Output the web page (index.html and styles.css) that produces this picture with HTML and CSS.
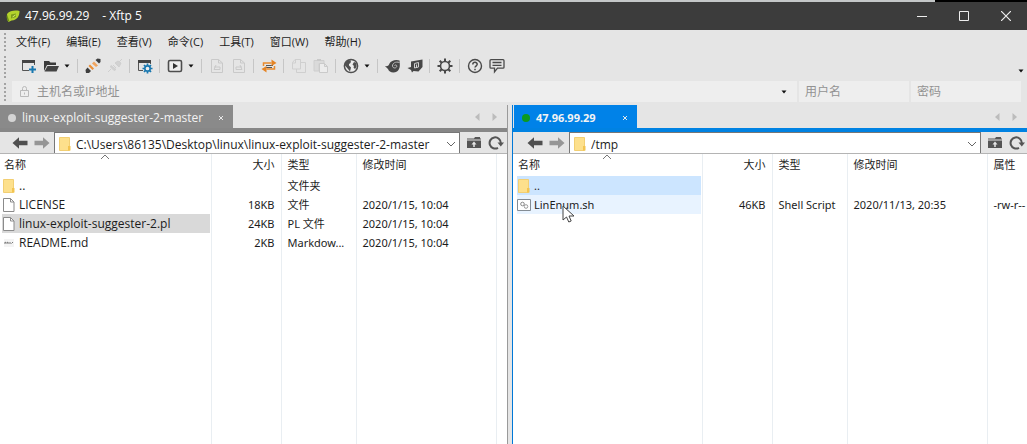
FILE: index.html
```
<!DOCTYPE html>
<html lang="zh-CN">
<head>
<meta charset="utf-8">
<meta name="viewport" content="width=device-width, initial-scale=1">
<title>47.96.99.29 - Xftp 5</title>
<link rel="stylesheet" href="styles.css">
</head>
<body>
<svg class="defs" width="0" height="0" aria-hidden="true">
  <symbol id="folder" viewBox="0 0 14 16"><path d="M1.500 1.500h10v13h-10z" fill="#fde08c" stroke="#f2cf73"/><path d="M10 10h2.500v4.500H10z" fill="#f3c450"/></symbol>
  <symbol id="file" viewBox="0 0 14 16"><path d="M1.500 1.500h7l3.500 3.500v9.500H1.500z" fill="#fff" stroke="#8b8b8b"/><path d="M8.500 1.500V5H12" fill="none" stroke="#8b8b8b"/></symbol>
  <symbol id="back" viewBox="0 0 16 14"><path d="M0.500 7L7 1.300V4.800h8.500v4.400H7v3.500z" fill="currentColor"/></symbol>
  <symbol id="up" viewBox="0 0 16 14"><path d="M2 2.500h6l1-1.500h5v1.500h1v1H1v-1zM1 4.500h14V12H1z" fill="#555"/><path d="M8 11V7.500" stroke="#e8e8e8" stroke-width="1.500"/><path d="M5.500 8.500L8 5.500l2.500 3z" fill="#e8e8e8"/></symbol>
  <symbol id="reload" viewBox="0 0 16 16"><path d="M10 12.800A5.600 5.600 0 1 1 12.800 8" fill="none" stroke="#555" stroke-width="2"/><path d="M9.500 7.500h6.500l-3.200 4z" fill="#555"/></symbol>
  <symbol id="chev" viewBox="0 0 10 6"><path d="M1 1l4 4 4-4" fill="none" stroke="#666"/></symbol>
  <symbol id="sort" viewBox="0 0 10 6"><path d="M1 5l4-4 4 4" fill="none" stroke="#777"/></symbol>
  <symbol id="caret" viewBox="0 0 8 6"><path d="M1.500 1.500h5L4 4.500z" fill="#111"/></symbol>
  <symbol id="prev" viewBox="0 0 6 8"><path d="M5.500 0v8L1 4z" fill="#bcbcbc"/></symbol>
  <symbol id="next" viewBox="0 0 6 8"><path d="M0.500 0v8L5 4z" fill="#bcbcbc"/></symbol>
  <symbol id="close" viewBox="0 0 6 6"><path d="M1 1l4 4M5 1L1 5" stroke="#e8e8e8"/></symbol>
</svg>
<div class="app">
  <div class="backdrop"></div>
  <header class="titlebar">
    <svg class="logo" viewBox="0 0 14 14" width="14" height="14"><path d="M1 5C4 1.500 9 1 13.500 2c0 5-2 9-8 9.500L2.500 13 1 10z" fill="#b4d22c"/><path d="M1 5.500l2.500 7L1.500 12 0.500 8z" fill="#6d8f18"/><path d="M5 9.500V5.500l5-1v3.500z" fill="#7d9c1c"/><path d="M6.500 8l3-2" stroke="#d8ec70" fill="none"/></svg>
    <h1><span>47.96.99.29</span><span>- Xftp 5</span></h1>
    <div class="winbtns">
      <button aria-label="最小化"><svg width="10" height="10" viewBox="0 0 10 10"><path d="M0 5.500h10" stroke="#eee"/></svg></button>
      <button aria-label="最大化"><svg width="10" height="10" viewBox="0 0 10 10"><path d="M.5.5h9v9h-9z" fill="none" stroke="#eee"/></svg></button>
      <button aria-label="关闭"><svg width="10" height="10" viewBox="0 0 10 10"><path d="M0 0l10 10M10 0L0 10" stroke="#eee" stroke-width="1.200"/></svg></button>
    </div>
  </header>

  <nav class="menubar">
    <button>文件(F)</button><button>编辑(E)</button><button>查看(V)</button><button>命令(C)</button><button>工具(T)</button><button>窗口(W)</button><button>帮助(H)</button>
  </nav>

  <div class="toolbar" role="toolbar">
    <button aria-label="新建"><svg viewBox="0 0 16 16"><path d="M8 12.500H1.500v-10h12V7" fill="none" stroke="#555"/><path d="M1 2h13v3H1z" fill="#444"/><path d="M11.500 8v7M8 11.500h7" stroke="#1978b0" stroke-width="2"/></svg></button>
    <button aria-label="打开"><svg viewBox="0 0 16 16"><path d="M1 13V3h5l1.500 1.500H13V7H4z" fill="#3c3c3c"/><path d="M4.500 8H16l-2.500 5.500H1.500z" fill="#444"/></svg></button>
    <button class="drop" aria-label="打开选项"><svg viewBox="0 0 8 6"><use href="#caret"/></svg></button>
    <i class="sep"></i>
    <button aria-label="连接"><svg viewBox="0 0 16 16"><path d="M0.500 12l2-2.500 3.500 3.500-2 2H1z" fill="#3e3e3e"/><path d="M3.500 8l1.500-1.500 4 4L7.500 12z" fill="#ec8e34"/><path d="M7 5.500l2-2 4 4-2 1.500z" fill="#f0a45e"/><path d="M10.500 2l2-1.500L15.500 1v3L14 5.500z" fill="#3e3e3e"/></svg></button>
    <button aria-label="断开" disabled><svg viewBox="0 0 16 16"><path d="M1 14l3-3M3.500 9l3.500 3.500 2-1-5-4zM8 5l4 4 2-4-3-2zM6 7l3 3M12 4l3-3" stroke="#cfcfcf" fill="#d2d2d2"/></svg></button>
    <i class="sep"></i>
    <button aria-label="属性"><svg viewBox="0 0 16 16"><path d="M6 12.500H1.500v-10h12V6" fill="none" stroke="#555"/><path d="M1 2h13v3H1z" fill="#444"/><circle cx="10.500" cy="10.500" r="2.700" fill="#eee" stroke="#1978b0" stroke-width="1.700"/><path d="M10.500 5.500v2M10.500 13.500v2M5.500 10.500h2M13.500 10.500h2M7 7l1.300 1.300M12.700 12.700L14 14M14 7l-1.300 1.300M8.300 12.700L7 14" stroke="#1978b0" stroke-width="1.700"/></svg></button>
    <i class="sep"></i>
    <button aria-label="传输"><svg viewBox="0 0 16 16"><rect x="1.500" y="2.500" width="13" height="11" rx="1.500" fill="#eee" stroke="#4d4d4d" stroke-width="1.600"/><path d="M6 5l5 3-5 3z" fill="#333"/></svg></button>
    <button class="drop" aria-label="传输选项"><svg viewBox="0 0 8 6"><use href="#caret"/></svg></button>
    <i class="sep"></i>
    <button aria-label="上传" disabled><svg viewBox="0 0 16 16"><path d="M2.500 1.500h7L13.500 5v9.500h-11zM9.500 1.500V5h4M5 9h6v2.500H5L7 7" fill="none" stroke="#c9c9c9"/></svg></button>
    <button aria-label="下载" disabled><svg viewBox="0 0 16 16"><path d="M2.500 1.500h7L13.500 5v9.500h-11zM9.500 1.500V5h4M11 9H5v2.500h6L9 7" fill="none" stroke="#c9c9c9"/></svg></button>
    <i class="sep"></i>
    <button aria-label="同步"><svg viewBox="0 0 16 16"><path d="M5 7.500h7M4 9.500h7" stroke="#555"/><path d="M2.500 8V5h8M13.500 8v3h-8" fill="none" stroke="#e98b2d" stroke-width="1.500"/><path d="M10.500 1.500L15.500 5l-5 3z" fill="#e58424"/><path d="M5.500 8L.5 11l5 3.500z" fill="#e58424"/></svg></button>
    <i class="sep"></i>
    <button aria-label="复制" disabled><svg viewBox="0 0 16 16"><path d="M1.500 4.500L4 1.500h5.500V11h-8zM10 4.500h4.500v10h-9V11M4.500 2v3h-3" fill="none" stroke="#cfcfcf"/></svg></button>
    <button aria-label="粘贴" disabled><svg viewBox="0 0 16 16"><path d="M1 2.500h10v3H6V13H1z" fill="#dadada" stroke="#cecece"/><path d="M4 1h4v2H4z" fill="#c9c9c9"/><path d="M6.500 5.500h5l3 3v6h-8zM11.500 5.500v3h3" fill="#ececec" stroke="#cacaca"/></svg></button>
    <i class="sep"></i>
    <button aria-label="浏览器"><svg viewBox="0 0 16 16"><circle cx="8" cy="8" r="6.600" fill="#ececec" stroke="#505050" stroke-width="1.500"/><path d="M2 5l3-3 3 .5L7.500 5 6 6v1.500L8 9.500l-1 4L5 11 2 7.500zM11 4l2.500 1v4l-1.500 2-1.500-1.500.5-1.500-1.500-1.500z" fill="#505050"/></svg></button>
    <button class="drop" aria-label="浏览器选项"><svg viewBox="0 0 8 6"><use href="#caret"/></svg></button>
    <i class="sep"></i>
    <button aria-label="Xshell"><svg viewBox="0 0 16 16"><path d="M0 8c2.500.5 4-.5 4.500-2.500C6 2.500 11 1 14.500 2.500c.5 4.500 1 8.500-2.500 11-4 2-8 .5-9-2.500z" fill="#464646"/><path d="M14.500 4.500C10.500 3.200 7.500 5.200 7.500 8c.2 2.500 3.800 2.600 4.300.4C12 7 10.500 6.500 9.500 7.500" fill="none" stroke="#bdbdbd"/></svg></button>
    <button aria-label="Xftp"><svg viewBox="0 0 16 16"><path d="M4 3.500L15.500 1.500V9l-4 4.500-5-.5L5 14.500 4 12 .5 10 4 9z" fill="#464646"/><path d="M7.500 5.500l4-1v4.500l-4 1z" fill="none" stroke="#cfcfcf"/><path d="M9.500 9V6.500" stroke="#cfcfcf"/></svg></button>
    <i class="sep"></i>
    <button aria-label="选项"><svg viewBox="0 0 16 16"><circle cx="8" cy="8" r="4.500" fill="none" stroke="#484848" stroke-width="1.600"/><path d="M8 .5v3M8 12.500v3M.5 8h3M12.500 8h3M2.700 2.700l2 2M11.300 11.300l2 2M13.300 2.700l-2 2M4.700 11.300l-2 2" stroke="#484848" stroke-width="2"/></svg></button>
    <i class="sep"></i>
    <button aria-label="帮助"><svg viewBox="0 0 16 16"><circle cx="8" cy="8" r="6.500" fill="none" stroke="#4a4a4a" stroke-width="1.400"/><path d="M5.800 6.500C5.800 3.500 10.300 3.700 10.200 6.300 10.200 7.800 8 7.800 8 9.600M8 10.700v1.600" fill="none" stroke="#4a4a4a" stroke-width="1.500"/></svg></button>
    <button aria-label="反馈"><svg viewBox="0 0 16 16"><path d="M2 1.700h12q1 0 1 1v6.500q0 1-1 1H8.500L5.500 14v-3.800H2q-1 0-1-1V2.700q0-1 1-1zM3.500 4.500h9M3.500 7.300h9" fill="none" stroke="#4a4a4a" stroke-width="1.300"/></svg></button>
    <button class="drop overflow" aria-label="更多"><svg viewBox="0 0 8 6"><use href="#caret"/></svg></button>
  </div>

  <form class="connect">
    <div class="host">
      <svg width="9" height="11" viewBox="0 0 9 11"><path d="M.5 4.500h8v6h-8zM2.500 4.500v-2q0-2 2-2t2 2v2M4.500 6.500v2" fill="none" stroke="#b9b9b9"/></svg>
      <input type="text" aria-label="主机名或IP地址" placeholder="主机名或IP地址">
      <button type="button" class="drop" aria-label="历史"><svg viewBox="0 0 8 6"><use href="#caret"/></svg></button>
    </div>
    <input type="text" aria-label="用户名" placeholder="用户名">
    <input type="password" aria-label="密码" placeholder="密码">
  </form>

  <main class="panes">
    <section class="pane local">
      <div class="tabs">
        <div class="tab"><i class="dot"></i><span>linux-exploit-suggester-2-master</span><button aria-label="关闭标签"><svg width="6" height="6"><use href="#close"/></svg></button></div>
        <div class="scroll"><button aria-label="上一个"><svg width="6" height="8"><use href="#prev"/></svg></button><button aria-label="下一个"><svg width="6" height="8"><use href="#next"/></svg></button></div>
      </div>
      <div class="pathbar">
        <button aria-label="后退"><svg width="16" height="14"><use href="#back"/></svg></button>
        <button class="fwd" aria-label="前进"><svg width="16" height="14"><use href="#back"/></svg></button>
        <div class="path"><svg width="14" height="16"><use href="#folder"/></svg><input type="text" aria-label="本地路径" value="C:\Users\86135\Desktop\linux\linux-exploit-suggester-2-master"><button aria-label="展开"><svg width="10" height="6"><use href="#chev"/></svg></button></div>
        <button aria-label="上级"><svg width="16" height="14"><use href="#up"/></svg></button>
        <button aria-label="刷新"><svg width="16" height="16"><use href="#reload"/></svg></button>
      </div>
      <div class="list">
        <table>
          <colgroup><col class="c-name"><col class="c-size"><col class="c-type"><col class="c-date"><col></colgroup>
          <thead><tr><th>名称<svg class="sort" width="10" height="6"><use href="#sort"/></svg></th><th class="num">大小</th><th>类型</th><th>修改时间</th><th></th></tr></thead>
          <tbody>
            <tr><td><span class="name"><svg width="14" height="16"><use href="#folder"/></svg>..</span></td><td></td><td>文件夹</td><td></td><td></td></tr>
            <tr><td><span class="name"><svg width="14" height="16"><use href="#file"/></svg>LICENSE</span></td><td class="num">18KB</td><td>文件</td><td>2020/1/15, 10:04</td><td></td></tr>
            <tr><td><span class="name selected"><svg width="14" height="16"><use href="#file"/></svg>linux-exploit-suggester-2.pl</span></td><td class="num">24KB</td><td>PL 文件</td><td>2020/1/15, 10:04</td><td></td></tr>
            <tr><td><span class="name"><svg width="14" height="16" viewBox="0 0 14 16"><path d="M2 4h10v8H2z" fill="#f4f4f4"/><path d="M3 9V7l1.500 1L6 7v2M8 7v2M9.500 8.500L11 7" stroke="#777" fill="none"/></svg>README.md</span></td><td class="num">2KB</td><td>Markdow...</td><td>2020/1/15, 10:04</td><td></td></tr>
            <tr class="rest"><td></td><td></td><td></td><td></td><td></td></tr>
          </tbody>
        </table>
      </div>
    </section>

    <section class="pane remote">
      <div class="tabs">
        <div class="tab"><i class="dot"></i><span>47.96.99.29</span><button aria-label="关闭标签"><svg width="6" height="6"><use href="#close"/></svg></button></div>
        <div class="scroll"><button aria-label="上一个"><svg width="6" height="8"><use href="#prev"/></svg></button><button aria-label="下一个"><svg width="6" height="8"><use href="#next"/></svg></button></div>
      </div>
      <div class="pathbar">
        <button aria-label="后退"><svg width="16" height="14"><use href="#back"/></svg></button>
        <button class="fwd" aria-label="前进"><svg width="16" height="14"><use href="#back"/></svg></button>
        <div class="path"><svg width="14" height="16"><use href="#folder"/></svg><input type="text" aria-label="远程路径" value="/tmp"><button aria-label="展开"><svg width="10" height="6"><use href="#chev"/></svg></button></div>
        <button aria-label="上级"><svg width="16" height="14"><use href="#up"/></svg></button>
        <button aria-label="刷新"><svg width="16" height="16"><use href="#reload"/></svg></button>
      </div>
      <div class="list">
        <table>
          <colgroup><col class="c-name"><col class="c-size"><col class="c-type"><col class="c-date"><col></colgroup>
          <thead><tr><th>名称<svg class="sort" width="10" height="6"><use href="#sort"/></svg></th><th class="num">大小</th><th>类型</th><th>修改时间</th><th>属性</th></tr></thead>
          <tbody>
            <tr><td><span class="name selected"><svg width="14" height="16"><use href="#folder"/></svg>..</span></td><td></td><td></td><td></td><td></td></tr>
            <tr><td><span class="name hover"><svg width="14" height="16" viewBox="0 0 14 16"><path d="M.5 2.500h13v11H.5z" fill="#fff" stroke="#848c94"/><circle cx="5.500" cy="7" r="1.800" fill="none" stroke="#888"/><circle cx="9" cy="9.500" r="1.800" fill="none" stroke="#999"/></svg>LinEnum.sh</span><svg class="pointer" width="13" height="18" viewBox="0 0 13 18"><path d="M1 1v14l3.500-3 2.300 5 2.400-1-2.200-5H12z" fill="#fff" stroke="#444"/></svg></td><td class="num">46KB</td><td>Shell Script</td><td>2020/11/13, 20:35</td><td>-rw-r--</td></tr>
            <tr class="rest"><td></td><td></td><td></td><td></td><td></td></tr>
          </tbody>
        </table>
      </div>
    </section>
  </main>
</div>
</body>
</html>
```

FILE: styles.css
```
* { box-sizing: border-box; }

body {
  margin: 0;
  background: #e5e5e5;
  color: #1c1c1c;
  font: 11px/16px "Open Sans", "Noto Sans CJK SC", sans-serif;
}

button, input {
  font: inherit;
  color: inherit;
  border: 0;
  padding: 0;
  margin: 0;
  background: none;
  outline: 0;
}

svg { display: block; flex: none; }
.defs { position: absolute; }

button {
  display: flex;
  flex: none;
  align-items: center;
  justify-content: center;
}

.app { display: flex; flex-direction: column; height: 100vh; overflow: hidden; }

.backdrop {
  flex: none;
  height: 2px;
  background: linear-gradient(90deg, #c4c7c8 91%, #000 91%);
}

.titlebar {
  display: flex;
  flex: none;
  align-items: center;
  height: 28px;
  padding-left: 6px;
  background: #3c3c3c;
  color: #fff;
}
.titlebar h1 {
  display: flex;
  gap: 13px;
  margin: 0 0 0 5px;
  font-size: 12px;
  font-weight: 400;
}
.winbtns { display: flex; margin-left: auto; }
.winbtns button { width: 42px; height: 28px; }

.menubar, .toolbar, .connect {
  display: flex;
  flex: none;
  align-items: center;
  position: relative;
}
.menubar::before, .toolbar::before, .connect::before {
  content: "";
  position: absolute;
  left: 4px;
  top: 3px;
  bottom: 2px;
  border-left: 2px dotted #a3a3a3;
}
.menubar { gap: 16px; height: 23px; padding-left: 16px; }

.toolbar { gap: 6px; height: 27px; padding: 0 4px 1px 21px; }
.toolbar button { width: 16px; height: 16px; }
.toolbar svg { width: 16px; height: 16px; }
.toolbar .drop { width: 8px; margin-left: -2px; }
.toolbar .drop svg, .drop svg { width: 8px; height: 6px; }
.toolbar .overflow { margin-left: auto; margin-right: -2px; align-self: flex-end; height: 16px; }
.sep { flex: none; width: 2px; height: 14px; border-left: 1px solid #c6c6c6; }

.connect { gap: 2px; height: 23px; padding: 1px 6px 1px 12px; color: #8c8c8c; }
.host { display: flex; flex: 1; align-items: center; height: 100%; padding: 0 9px 0 8px; background: #eee; }
.host input { flex: 1; min-width: 0; margin-left: 8px; }
.connect > input { width: 110px; height: 100%; padding-left: 6px; background: #eee; }
.connect input { font-size: 12px; }
.connect input::placeholder { color: #929292; opacity: 1; }

.panes {
  display: grid;
  flex: 1;
  min-height: 0;
  grid-template-columns: minmax(0, 508fr) minmax(0, 515fr);
  gap: 4px;
  padding-top: 2px;
}
.pane { display: flex; flex-direction: column; min-width: 0; overflow: hidden; }
.local { border-right: 1px solid #9a9a9a; }
.remote { border-left: 1px solid #0078d7; }

.tabs { display: flex; flex: none; height: 27px; border-bottom: 4px solid #878787; }
.remote .tabs { border-color: #0082e2; }
.tab {
  display: flex;
  align-items: center;
  width: 233px;
  padding: 2px 9px 0 8px;
  background: #8a8a8a;
  color: #f3f3f3;
  font-size: 12px;
}
.remote .tab {
  width: 123px;
  margin-left: 1px;
  background: #0082e8;
  font-family: "Noto Sans", sans-serif;
  font-size: 11px;
  font-weight: 700;
}
.dot { width: 8px; height: 8px; margin-right: 6px; border-radius: 50%; background: #d4d4d4; }
.remote .dot { background: #0b9a20; }
.tab button { margin-left: auto; }
.scroll { display: flex; gap: 12px; margin-left: auto; padding-right: 9px; }

.pathbar { display: flex; flex: none; align-items: stretch; height: 22px; padding: 0 3px 0 12px; border-bottom: 1px solid #b4b4b4; background: #e5e5e5; color: #505050; }
.remote .pathbar { padding-left: 14px; padding-right: 2px; }
.pathbar > button { margin-right: 6px; }
.pathbar > button:last-child { margin-right: 0; }
.pathbar > .fwd { margin-right: 4px; color: #969696; transform: scaleX(-1); }
.path {
  display: flex;
  flex: 1;
  align-items: center;
  min-width: 0;
  margin-right: 6px;
  padding: 1px 3px 0;
  border: solid #777;
  border-width: 1px 1px 0;
  background: #fff;
  color: #1c1c1c;
}
.path input { flex: 1; min-width: 0; margin-left: 4px; padding-top: 2px; font-size: 12px; }

.list { flex: 1; min-height: 0; background: #fff; }
table { width: 100%; height: 100%; table-layout: fixed; border-collapse: collapse; }
.c-name { width: 211px; }
.remote .c-name { width: 189px; }
.c-size { width: 70px; }
.c-type { width: 75px; }
.c-date { width: 140px; }
th, td {
  position: relative;
  height: 19px;
  padding: 0 6px;
  border-right: 1px solid #e9eef2;
  font-weight: 400;
  text-align: left;
  white-space: nowrap;
}
td { font-family: "Noto Sans", "Noto Sans CJK SC", sans-serif; }
th { height: 22px; padding-bottom: 1px; }
th:first-child { padding-left: 4px; }
.remote th:first-child { padding-left: 5px; }
th:last-child, td:last-child { border-right: 0; }
td:first-child { padding: 0 1px 0 2px; }
.remote td:first-child { padding-left: 4px; }
.num { text-align: right; }
.rest td { height: auto; }
.sort { position: absolute; left: 50%; top: 0; margin-left: -5px; }
.name { display: flex; align-items: center; gap: 3px; height: 19px; }
.local .name { font-family: "Open Sans", sans-serif; font-size: 12px; }
.selected { background: #d9d9d9; }
.remote .selected { background: #cce5ff; }
.hover { background: #e8f3ff; }
.pointer { position: absolute; left: 49px; top: 10px; z-index: 1; }
```
